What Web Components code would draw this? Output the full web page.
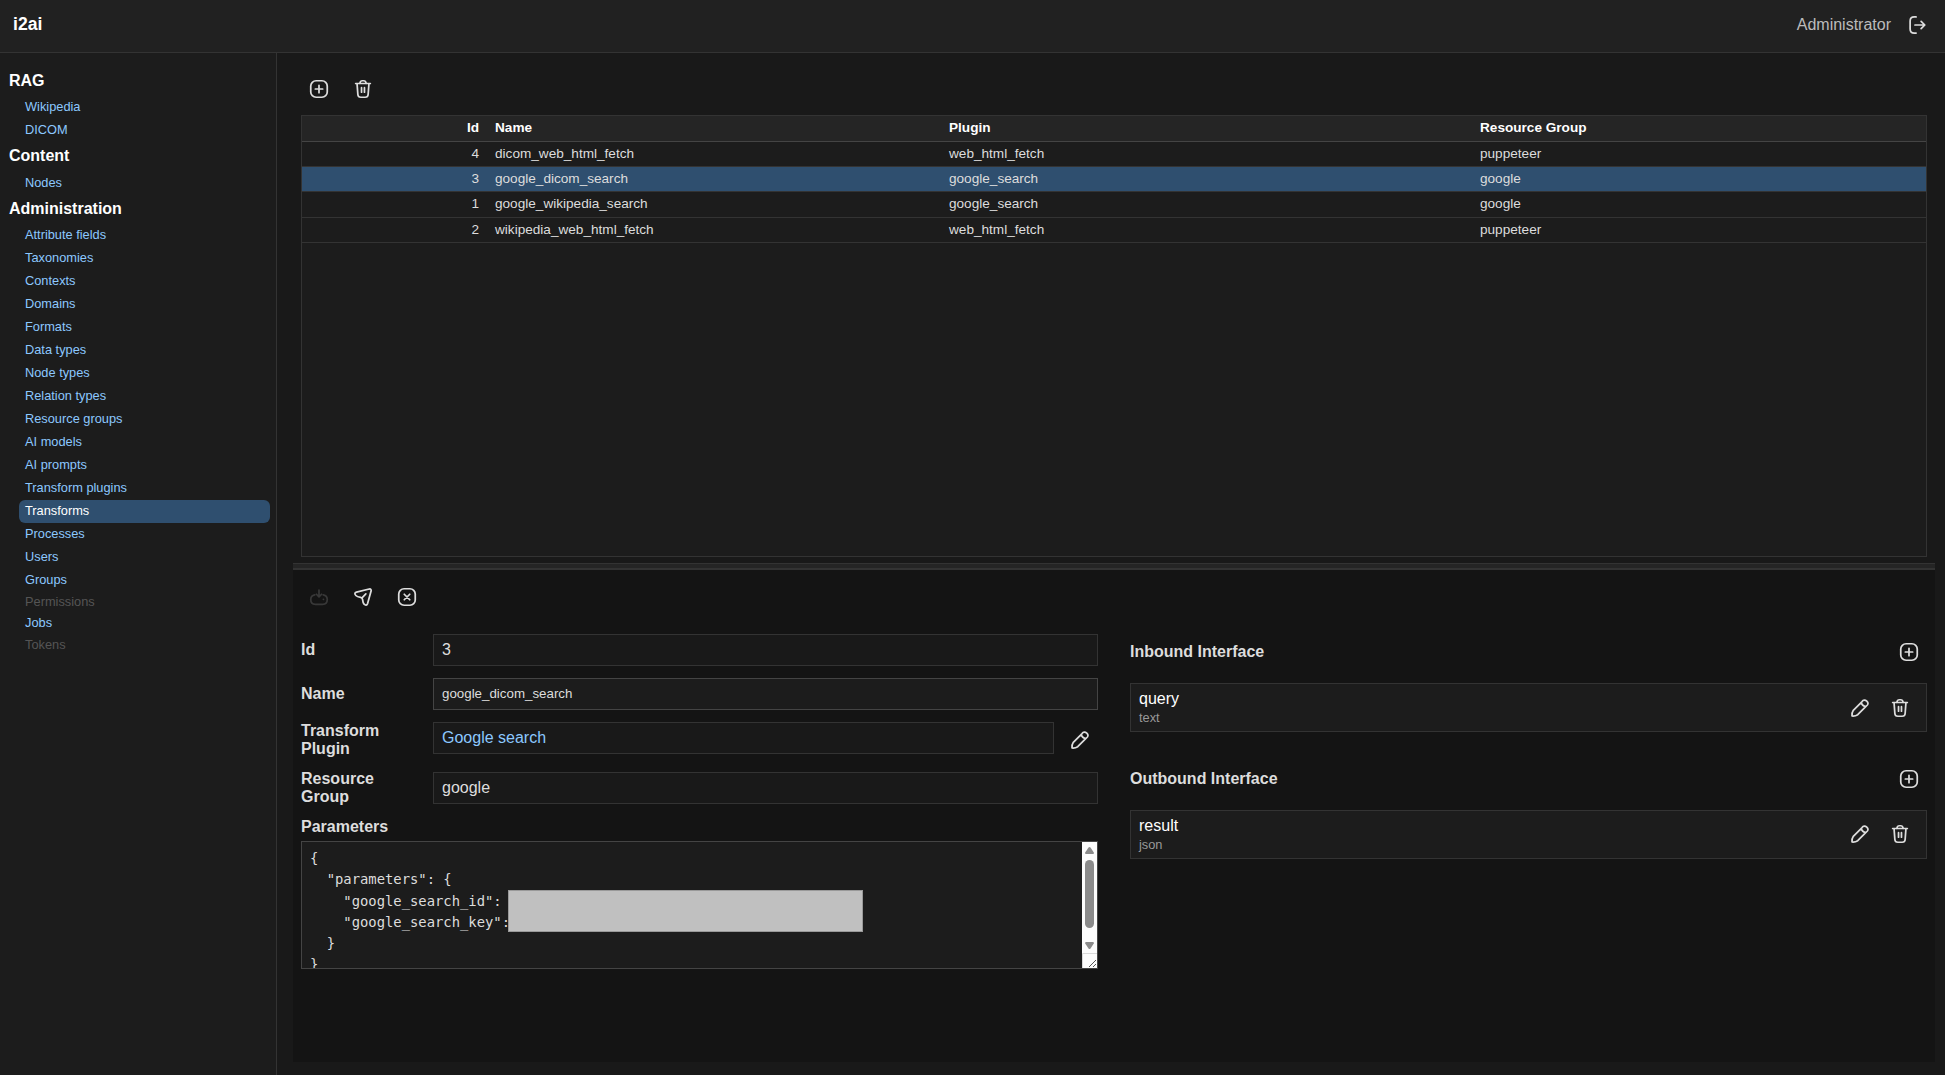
<!DOCTYPE html>
<html lang="en">
<head>
<meta charset="utf-8">
<title>i2ai</title>
<style>
    html, body {
        margin: 0;
        height: 100%;
        overflow: hidden;
        background: #191919;
        color: #ddd;
        font: 16px/18px "Liberation Sans", Arial, sans-serif;
    }
</style>
</head>
<body>
<i2-app>
    <i2-header slot="header" user="Administrator">i2ai</i2-header>
    <i2-nav slot="nav"></i2-nav>
    <i2-panel slot="top">
        <i2-toolbar slot="tools">
            <i2-icon name="plus"></i2-icon>
            <i2-icon name="trash"></i2-icon>
        </i2-toolbar>
        <i2-table></i2-table>
    </i2-panel>
    <i2-panel slot="bottom" dark>
        <i2-toolbar slot="tools">
            <i2-icon name="save" disabled></i2-icon>
            <i2-icon name="send"></i2-icon>
            <i2-icon name="close"></i2-icon>
        </i2-toolbar>
        <i2-transform-form></i2-transform-form>
    </i2-panel>
</i2-app>

<script>
const ICONS = {
    plus: '<rect x="3" y="3" width="18" height="18" rx="5.8"/><path d="M12 8v8M8 12h8"/>',
    close: '<rect x="3" y="3" width="18" height="18" rx="5.8"/><path d="m9 9 6 6m0-6-6 6"/>',
    trash: '<path d="M4 6h16M8.5 6l.5-1.6Q9.5 3 11 3h2q1.500 0 2 1.400L15.500 6M5.500 6l.9 12q.2 3 3.200 3h4.800q3 0 3.200-3l.9-12M10.400 10.500v5M13.600 10.500v5"/>',
    send: '<path d="M18.800 3.300 4.900 6.700Q1.800 7.800 4.200 10.400 5.500 11.800 9.300 12.300 11.300 12.600 11.500 14.600 11.900 18.300 13.200 19.900 15.600 22.200 17 19.200L20.900 5.200q.2-2.300-2.100-1.900ZM10.900 12.900l4.200-4.200"/>',
    save: '<path d="M12 4.500v7.200M9.200 9l2.800 2.800L14.800 9M7.300 9.600q-4.300.7-4.300 5.200 0 5.200 5 5.200h8q5 0 5-5.200 0-4.500-4.300-5.200M16.800 14.500h.1"/>',
    pencil: '<path d="M14 5.200q2.500-3.200 5.400-.6 2.900 2.800-.6 5.400L9.500 19.300Q7 21 3.300 20.700 3 17 4.700 14.500ZM13.400 5.800q.3 1.900 1.700 3.200t3.200 1.500"/>',
    logout: '<path d="M11 3.200H9Q4.500 3.200 4.500 7.700v8.600q0 4.500 4.500 4.500h2M9.800 12h10.200M16.500 8l4 4-4 4"/>'
};

const NAV = [
    ['RAG', ['Wikipedia', 'DICOM']],
    ['Content', ['Nodes']],
    ['Administration', [
        'Attribute fields', 'Taxonomies', 'Contexts', 'Domains', 'Formats',
        'Data types', 'Node types', 'Relation types', 'Resource groups',
        'AI models', 'AI prompts', 'Transform plugins', 'Transforms',
        'Processes', 'Users', 'Groups', 'Permissions', 'Jobs', 'Tokens'
    ]]
];
const ACTIVE = 'Transforms';
const DISABLED = ['Permissions', 'Tokens'];

const ROWS = [
    [4, 'dicom_web_html_fetch', 'web_html_fetch', 'puppeteer'],
    [3, 'google_dicom_search', 'google_search', 'google'],
    [1, 'google_wikipedia_search', 'google_search', 'google'],
    [2, 'wikipedia_web_html_fetch', 'web_html_fetch', 'puppeteer']
];
const SELECTED_ID = 3;

class BaseElement extends HTMLElement {
    constructor() {
        super();
        this.attachShadow({ mode: 'open' });
    }

    connectedCallback() {
        this.shadowRoot.innerHTML = this.render();
    }
}

class I2Icon extends BaseElement {
    render() {
        return `
        <style>
            :host { display: block; flex: none; width: 22px; height: 22px; color: #ddd; }
            :host([disabled]) { color: #383838; }
            svg { display: block; width: 100%; height: 100%; }
        </style>
        <svg viewBox="0 0 24 24" fill="none" stroke="currentColor" stroke-width="1.9"
            stroke-linecap="round" stroke-linejoin="round">${ICONS[this.getAttribute('name')]}</svg>`;
    }
}

class I2App extends BaseElement {
    render() {
        return `
        <style>
            :host {
                display: grid;
                grid-template: 53px 1fr / 277px 1fr;
                height: 100vh;
            }
            slot[name="header"] { display: block; grid-column: 1 / 3; }
            slot[name="nav"] { display: block; }
            main {
                display: grid;
                grid-template-rows: 494px 7px 1fr;
                margin: 16px 10px 13px 16px;
                min-height: 0;
            }
            .divider {
                box-sizing: border-box;
                background: #252525;
                border-top: 1px solid #333;
                border-bottom: 2px solid #333;
            }
        </style>
        <slot name="header"></slot>
        <slot name="nav"></slot>
        <main>
            <slot name="top"></slot>
            <div class="divider"></div>
            <slot name="bottom"></slot>
        </main>`;
    }
}

class I2Header extends BaseElement {
    render() {
        return `
        <style>
            :host {
                display: flex;
                justify-content: space-between;
                box-sizing: border-box;
                height: 53px;
                padding: 0 17px 0 13px;
                background: #212121;
                border-bottom: 1px solid #333;
            }
            h1 { margin: 13px 0 0; font-size: 17.6px; line-height: 22px; color: #fff; }
            .user { display: flex; gap: 15px; height: 22px; margin-top: 14px; line-height: 21px; color: #bbb; }
        </style>
        <h1><slot></slot></h1>
        <div class="user"><span>${this.getAttribute('user')}</span><i2-icon name="logout"></i2-icon></div>`;
    }
}

class I2Nav extends BaseElement {
    renderItem(name) {
        const state = name === ACTIVE ? 'active' : DISABLED.includes(name) ? 'disabled' : '';
        return `<li class="${state}">${name}</li>`;
    }

    render() {
        return `
        <style>
            :host {
                display: block;
                box-sizing: border-box;
                height: 100%;
                padding: 14px 6px 0 9px;
                background: #1c1c1c;
                border-right: 1px solid #333;
            }
            h2 { margin: 0; height: 29.3px; font-size: 16px; line-height: 27px; color: #fff; }
            ul { margin: 0; padding: 0 0 0 10px; list-style: none; }
            li {
                box-sizing: border-box;
                height: 23px;
                padding-left: 6px;
                font-size: 12.8px;
                line-height: 22px;
                color: #8cc8ff;
                border-radius: 6px;
            }
            .active { background: #2f4f6f; color: #fff; }
            .disabled { height: 20px; line-height: 20px; color: #555; }
        </style>
        ${NAV.map(([title, items]) => `
            <h2>${title}</h2>
            <ul>${items.map(item => this.renderItem(item)).join('')}</ul>
        `).join('')}`;
    }
}

class I2Panel extends BaseElement {
    render() {
        return `
        <style>
            :host {
                display: flex;
                flex-direction: column;
                box-sizing: border-box;
                height: 100%;
                padding: 0 8px 6px;
            }
            :host([dark]) { background: #141414; padding-top: 7px; }
            .body { flex: 1; min-height: 0; }
        </style>
        <slot name="tools"></slot>
        <div class="body"><slot></slot></div>`;
    }
}

class I2Toolbar extends BaseElement {
    render() {
        return `
        <style>
            :host {
                display: flex;
                gap: 22px;
                box-sizing: border-box;
                height: 46px;
                padding: 9px 7px;
            }
        </style>
        <slot></slot>`;
    }
}

class I2Table extends BaseElement {
    render() {
        return `
        <style>
            :host {
                display: block;
                box-sizing: border-box;
                height: 442px;
                background: #1c1c1c;
                border: 1px solid #333;
                font-size: 13.6px;
            }
            .row {
                display: grid;
                grid-template-columns: 185px 454px 531px 1fr;
                box-sizing: border-box;
                height: 25.2px;
                line-height: 24px;
                border-bottom: 1px solid #333;
            }
            .row > span { padding: 0 8px; }
            .row > span:first-child { text-align: right; }
            .head {
                height: 26px;
                background: #252525;
                border-color: #444;
                color: #fff;
                font-weight: bold;
            }
            .selected { background: #2f4f6f; }
        </style>
        <div class="row head"><span>Id</span><span>Name</span><span>Plugin</span><span>Resource Group</span></div>
        ${ROWS.map(row => `
            <div class="row ${row[0] === SELECTED_ID ? 'selected' : ''}">
                ${row.map(cell => `<span>${cell}</span>`).join('')}
            </div>
        `).join('')}`;
    }
}

class I2Field extends BaseElement {
    render() {
        return `
        <style>
            :host { display: grid; grid-template-columns: 132px 1fr; align-items: center; }
            label { font-weight: bold; width: 100px; }
            .control { display: flex; align-items: center; }
            .box {
                flex: 1;
                box-sizing: border-box;
                height: 32px;
                padding: 0 8px;
                line-height: 29px;
                background: #191919;
                border: 1px solid #333;
            }
            :host([editable]) .box {
                background: #1c1c1c;
                border-color: #444;
                font-size: 13.333px;
            }
            :host([link]) .control { align-self: stretch; }
            :host([link]) .box { align-self: flex-start; color: #8cc8ff; }
        </style>
        <label>${this.getAttribute('label')}</label>
        <div class="control">
            <div class="box"><slot></slot></div>
            <slot name="action"></slot>
        </div>`;
    }
}

class I2CodeArea extends BaseElement {
    render() {
        return `
        <style>
            :host {
                display: flex;
                position: relative;
                box-sizing: border-box;
                height: 128px;
                background: #1c1c1c;
                border: 1px solid #444;
                overflow: hidden;
            }
            pre {
                flex: 1;
                margin: 0;
                padding: 6px 8px;
                font: 13.85px/21.28px "DejaVu Sans Mono", monospace;
            }
            .mask {
                position: absolute;
                left: 206px;
                top: 48px;
                box-sizing: border-box;
                width: 355px;
                height: 42px;
                background: #c0c0c0;
                border: 1px solid #999;
            }
            svg { display: block; width: 15px; height: 126px; }
        </style>
        <pre>{
  "parameters": {
    "google_search_id":
    "google_search_key":
  }
}</pre>
        <div class="mask"></div>
        <svg viewBox="0 0 15 126">
            <rect width="15" height="126" fill="#fcfcfc"/>
            <path d="M3.200 10.500 6.500 5.600Q7.500 4.500 8.500 5.600L11.800 10.500Q12.300 12 11 12H4Q2.700 12 3.200 10.500Z" fill="#8b8b8b"/>
            <rect x="3" y="18" width="9" height="68" rx="4.500" fill="#8b8b8b"/>
            <path d="M3.200 101.500 6.500 106.400Q7.500 107.500 8.500 106.400L11.800 101.500Q12.300 100 11 100H4Q2.700 100 3.200 101.500Z" fill="#8b8b8b"/>
            <path d="M.5 126V111.500H15" fill="none" stroke="#d9d9d9"/>
            <path d="M7 125 14 118M11 125 14 122" fill="none" stroke="#555"/>
        </svg>`;
    }
}

class I2Interface extends BaseElement {
    render() {
        return `
        <style>
            :host { display: block; }
            header {
                display: flex;
                justify-content: space-between;
                align-items: center;
                height: 22px;
                padding-right: 7px;
                font-weight: bold;
            }
            .item {
                display: flex;
                align-items: center;
                box-sizing: border-box;
                height: 49px;
                margin-top: 20.4px;
                padding: 0 15px 0 8px;
                background: #1c1c1c;
                border: 1px solid #333;
            }
            .text { flex: 1; }
            .name { color: #fff; line-height: 20px; }
            .type { color: #999; font-size: 12.8px; line-height: 17px; }
            i2-icon + i2-icon { margin-left: 18px; }
        </style>
        <header><span><slot></slot></span><i2-icon name="plus"></i2-icon></header>
        <div class="item">
            <div class="text">
                <div class="name">${this.getAttribute('name')}</div>
                <div class="type">${this.getAttribute('type')}</div>
            </div>
            <i2-icon name="pencil"></i2-icon>
            <i2-icon name="trash"></i2-icon>
        </div>`;
    }
}

class I2TransformForm extends BaseElement {
    render() {
        return `
        <style>
            :host {
                display: grid;
                grid-template-columns: 797px 797px;
                column-gap: 32px;
                padding-top: 11px;
            }
            .fields { display: flex; flex-direction: column; }
            i2-field { margin-bottom: 12px; }
            i2-field i2-icon { margin: 0 7px 0 15px; }
            .caption { height: 23px; font-weight: bold; }
            .interfaces { padding-top: 7px; }
            .outbound { margin-top: 35.2px; }
        </style>
        <div class="fields">
            <i2-field label="Id">3</i2-field>
            <i2-field label="Name" editable>google_dicom_search</i2-field>
            <i2-field label="Transform Plugin" link>Google search<i2-icon slot="action" name="pencil"></i2-icon></i2-field>
            <i2-field label="Resource Group">google</i2-field>
            <div class="caption">Parameters</div>
            <i2-code-area></i2-code-area>
        </div>
        <div class="interfaces">
            <i2-interface name="query" type="text">Inbound Interface</i2-interface>
            <i2-interface class="outbound" name="result" type="json">Outbound Interface</i2-interface>
        </div>`;
    }
}

customElements.define('i2-icon', I2Icon);
customElements.define('i2-app', I2App);
customElements.define('i2-header', I2Header);
customElements.define('i2-nav', I2Nav);
customElements.define('i2-panel', I2Panel);
customElements.define('i2-toolbar', I2Toolbar);
customElements.define('i2-table', I2Table);
customElements.define('i2-field', I2Field);
customElements.define('i2-code-area', I2CodeArea);
customElements.define('i2-interface', I2Interface);
customElements.define('i2-transform-form', I2TransformForm);
</script>
</body>
</html>
